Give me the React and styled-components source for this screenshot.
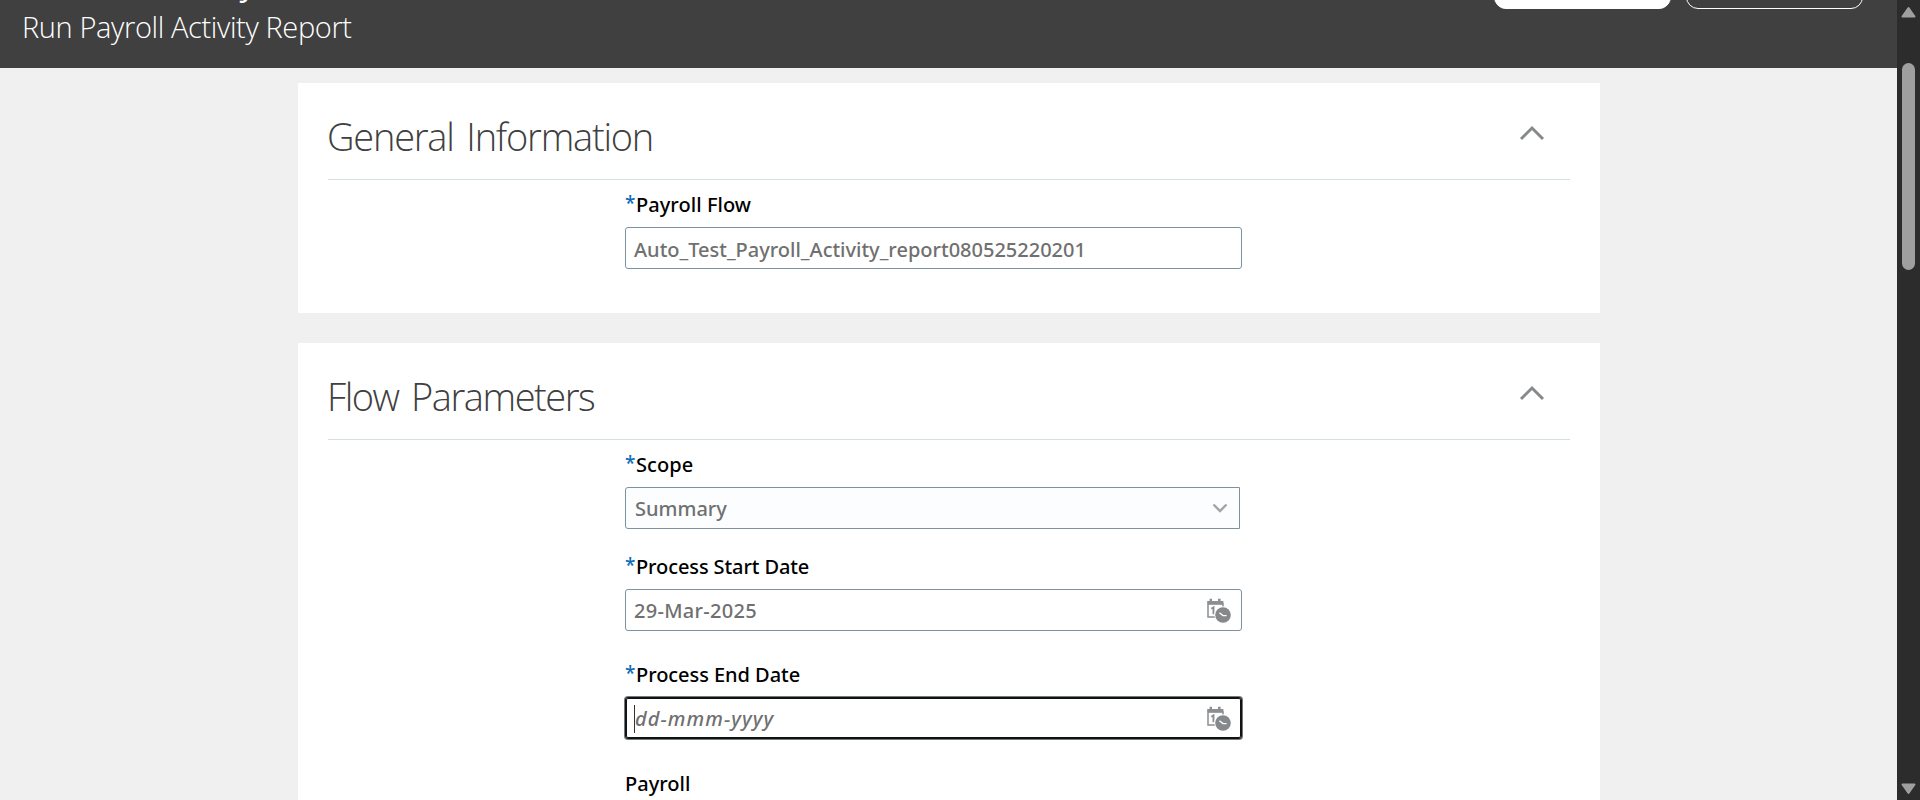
import React from 'react';
import styled, { createGlobalStyle, css } from 'styled-components';

const GlobalStyle = createGlobalStyle`
  * { box-sizing: border-box; }
  html, body { margin: 0; height: 100%; overflow: hidden; background: #f0f0f0; }
  #root { height: 100%; }
`;

const Window = styled.div`
  display: flex;
  height: 800px;
  overflow: hidden;
  font-family: "Noto Sans", "Open Sans", sans-serif;
  color: #000;
`;

const Page = styled.div`
  flex: 1;
  min-width: 0;
  height: 100%;
  overflow: hidden;
  background: #f0f0f0;
`;

const Header = styled.header`
  display: flex;
  justify-content: space-between;
  align-items: flex-start;
  height: 68px;
  padding: 0 34px 0 22px;
  background: #404040;
  color: #fff;
  overflow: hidden;
`;

const HeaderTitles = styled.div`
  display: flex;
  flex-direction: column;
  margin-top: -39px;
`;

const PageTitle = styled.div`
  width: 234px;
  height: 47px;
  font: 400 33px/44px "Open Sans", sans-serif;
  text-align: right;
`;

const Subtitle = styled.h1`
  margin: 0;
  font: 300 29px/38px "Open Sans", sans-serif;
  letter-spacing: -0.38px;
  white-space: nowrap;
`;

const HeaderActions = styled.div`
  display: flex;
  gap: 15px;
  margin-top: -31px;
`;

const HeaderButton = styled.button`
  width: 177px;
  height: 40px;
  padding: 0;
  border: 1px solid #fff;
  border-radius: 12px;
  background: ${(p) => (p.$primary ? '#fff' : 'transparent')};
`;

const Content = styled.main`
  display: flex;
  flex-direction: column;
  gap: 30px;
  width: 1302px;
  margin: 15px 0 0 298px;
`;

const Card = styled.section`
  height: ${(p) => p.$height}px;
  padding: 0 30px;
  background: #fff;
`;

const CardHeader = styled.div`
  display: flex;
  align-items: center;
  justify-content: space-between;
  height: 97px;
  padding: 10px 25px 0 0;
  border-bottom: 1px solid #d5dfe4;
`;

const CardTitle = styled.h2`
  margin: 0 0 0 -1px;
  font: 300 38px/52px "Open Sans", sans-serif;
  letter-spacing: ${(p) => p.$spacing}px;
  word-spacing: 4px;
  color: #404040;
`;

const CollapseIcon = styled.svg`
  width: 26px;
  height: 18px;
  margin-bottom: 7px;
  fill: none;
  stroke: #87898b;
  stroke-width: 3;
`;

const Form = styled.div`
  display: flex;
  flex-direction: column;
  width: 617px;
  margin: 11px 0 0 297px;
`;

const Field = styled.div`
  display: flex;
  flex-direction: column;
  margin-bottom: ${(p) => p.$after || 0}px;
`;

const Label = styled.label`
  display: flex;
  height: 36px;
  font-size: 20px;
  font-weight: 500;
  line-height: 28px;
  letter-spacing: ${(p) => p.$spacing || 0}px;
`;

const Required = styled.span`
  width: 11px;
  margin-top: -2px;
  color: #0b6cb8;
  font-size: 19px;
  letter-spacing: 0;
`;

const Control = styled.div`
  display: flex;
  align-items: center;
  justify-content: space-between;
  width: 617px;
  height: 42px;
  padding: ${(p) => p.$top || 2}px 10px 0 8px;
  border: 1px solid #7c939f;
  border-radius: 3px;
  background: #fff;
  color: #707070;
  font-size: 20px;
  font-weight: 500;
  line-height: 28px;
  letter-spacing: ${(p) => p.$spacing || 0}px;
  ${(p) => p.$select && css`
    width: 615px;
    padding-left: 9px;
    padding-right: 11px;
    border-radius: 3px 0 0 3px;
    background: #fbfdff;
  `}
  ${(p) => p.$focused && css`
    border-color: #101214;
    box-shadow: inset 0 0 0 1px #101214, 0 0 0 1px #74797c;
  `}
`;

const Placeholder = styled.span`
  border-left: 1px solid #333;
  font-style: italic;
`;

const DropdownIcon = styled.svg`
  width: 16px;
  height: 12px;
  margin-bottom: 2px;
  fill: none;
  stroke: #a2a4a6;
  stroke-width: 2.4;
`;

const DateIconSvg = styled.svg`
  width: 25px;
  height: 25px;
  margin-bottom: 1px;
`;

const Scrollbar = styled.aside`
  display: flex;
  flex-direction: column;
  align-items: center;
  justify-content: space-between;
  width: 23px;
  height: 100%;
  padding: 6px 0 5px;
  background: #2c2c2c;
`;

const ScrollArrow = styled.svg`
  width: 15px;
  height: 12px;
  fill: #9f9f9f;
  stroke: #9f9f9f;
  stroke-width: 2;
  stroke-linejoin: round;
`;

const Track = styled.div`
  flex: 1;
  width: 13px;
  padding-top: 45px;
`;

const Thumb = styled.div`
  height: 207px;
  border-radius: 7px;
  background: #9f9f9f;
`;

function DateIcon() {
  return (
    <DateIconSvg viewBox="0 0 25 25">
      <path d="M2 5.5V19H9M2 6H17V9" fill="none" stroke="#8b8f92" strokeWidth="1.5" />
      <path d="M1.2 3H3.6V0.8H6V3H12V0.8H14.6V3H17.4V6.3H1.2Z" fill="#8b8f92" />
      <path d="M5.3 10.8L7.5 9.5V16.2" fill="none" stroke="#8b8f92" strokeWidth="1.9" />
      <circle cx="17" cy="17" r="8.7" fill="#fff" />
      <circle cx="17" cy="17" r="7.8" fill="#85898c" />
      <path d="M13.4 14.8L17 17.6H20.6" fill="none" stroke="#fff" strokeWidth="1.4" />
    </DateIconSvg>
  );
}

function Section({ title, spacing, height, children }) {
  return (
    <Card $height={height}>
      <CardHeader>
        <CardTitle $spacing={spacing}>{title}</CardTitle>
        <CollapseIcon viewBox="0 0 26 18">
          <path d="M2 15L13 4L24 15" />
        </CollapseIcon>
      </CardHeader>
      <Form>{children}</Form>
    </Card>
  );
}

function FormField({ label, required, spacing, after, children }) {
  return (
    <Field $after={after}>
      <Label $spacing={spacing}>
        {required && <Required>*</Required>}
        {label}
      </Label>
      {children}
    </Field>
  );
}

export default function App() {
  return (
    <Window>
      <GlobalStyle />
      <Page>
        <Header>
          <HeaderTitles>
            <PageTitle>y</PageTitle>
            <Subtitle>Run Payroll Activity Report</Subtitle>
          </HeaderTitles>
          <HeaderActions>
            <HeaderButton $primary />
            <HeaderButton />
          </HeaderActions>
        </Header>
        <Content>
          <Section title="General Information" spacing={-1.22} height={230}>
            <FormField label="Payroll Flow" required spacing={0.05}>
              <Control $top={4}>Auto_Test_Payroll_Activity_report080525220201</Control>
            </FormField>
          </Section>
          <Section title="Flow Parameters" spacing={-1.45} height={520}>
            <FormField label="Scope" required spacing={0.1} after={24}>
              <Control $select>
                Summary
                <DropdownIcon viewBox="0 0 16 12">
                  <path d="M1.5 2.5L8 9L14.5 2.5" />
                </DropdownIcon>
              </Control>
            </FormField>
            <FormField label="Process Start Date" required spacing={-0.1} after={30}>
              <Control $spacing={0.3}>
                29-Mar-2025
                <DateIcon />
              </Control>
            </FormField>
            <FormField label="Process End Date" required spacing={-0.05} after={31}>
              <Control $focused $spacing={1.05}>
                <Placeholder>dd-mmm-yyyy</Placeholder>
                <DateIcon />
              </Control>
            </FormField>
            <FormField label="Payroll" />
          </Section>
        </Content>
      </Page>
      <Scrollbar>
        <ScrollArrow viewBox="0 0 15 12">
          <path d="M7.5 2L13.5 10.5H1.5Z" />
        </ScrollArrow>
        <Track>
          <Thumb />
        </Track>
        <ScrollArrow viewBox="0 0 15 12">
          <path d="M7.5 10L13.5 1.5H1.5Z" />
        </ScrollArrow>
      </Scrollbar>
    </Window>
  );
}
